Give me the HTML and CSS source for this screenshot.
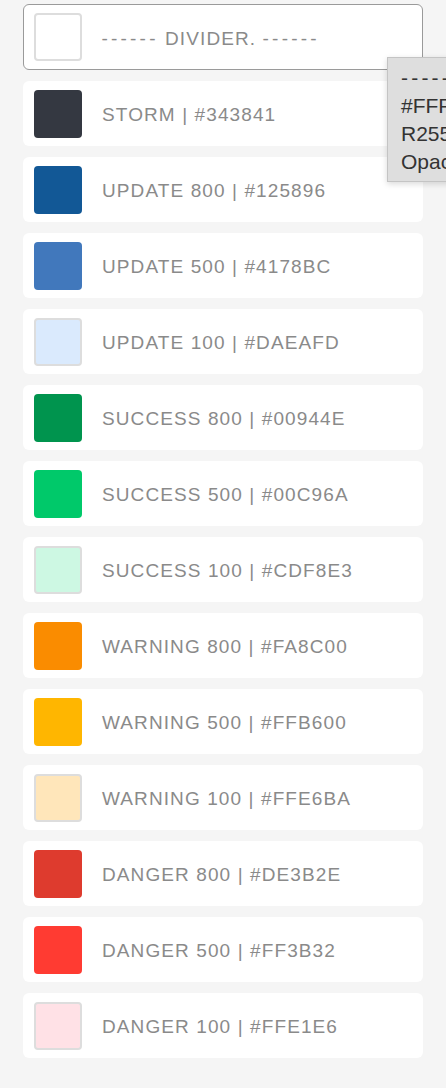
FILE: index.html
```html
<!DOCTYPE html>
<html lang="en">
<head>
    <meta charset="UTF-8">
    <meta name="viewport" content="width=device-width, initial-scale=1.0">
    <title>Palette</title>
    <link rel="stylesheet" href="styles.css">
</head>
<body>
    <div class="palette">
        <div class="swatch-row selected">
            <div class="chip chip-light" style="background-color: #FFFFFF"></div>
            <span class="label"><span class="dashes">------</span> DIVIDER. <span class="dashes">------</span></span>
        </div>
        <div class="swatch-row">
            <div class="chip" style="background-color: #343841"></div>
            <span class="label">STORM | #343841</span>
        </div>
        <div class="swatch-row">
            <div class="chip" style="background-color: #125896"></div>
            <span class="label">UPDATE 800 | #125896</span>
        </div>
        <div class="swatch-row">
            <div class="chip" style="background-color: #4178BC"></div>
            <span class="label">UPDATE 500 | #4178BC</span>
        </div>
        <div class="swatch-row">
            <div class="chip chip-light" style="background-color: #DAEAFD"></div>
            <span class="label">UPDATE 100 | #DAEAFD</span>
        </div>
        <div class="swatch-row">
            <div class="chip" style="background-color: #00944E"></div>
            <span class="label">SUCCESS 800 | #00944E</span>
        </div>
        <div class="swatch-row">
            <div class="chip" style="background-color: #00C96A"></div>
            <span class="label">SUCCESS 500 | #00C96A</span>
        </div>
        <div class="swatch-row">
            <div class="chip chip-light" style="background-color: #CDF8E3"></div>
            <span class="label">SUCCESS 100 | #CDF8E3</span>
        </div>
        <div class="swatch-row">
            <div class="chip" style="background-color: #FA8C00"></div>
            <span class="label">WARNING 800 | #FA8C00</span>
        </div>
        <div class="swatch-row">
            <div class="chip" style="background-color: #FFB600"></div>
            <span class="label">WARNING 500 | #FFB600</span>
        </div>
        <div class="swatch-row">
            <div class="chip chip-light" style="background-color: #FFE6BA"></div>
            <span class="label">WARNING 100 | #FFE6BA</span>
        </div>
        <div class="swatch-row">
            <div class="chip" style="background-color: #DE3B2E"></div>
            <span class="label">DANGER 800 | #DE3B2E</span>
        </div>
        <div class="swatch-row">
            <div class="chip" style="background-color: #FF3B32"></div>
            <span class="label">DANGER 500 | #FF3B32</span>
        </div>
        <div class="swatch-row">
            <div class="chip chip-light" style="background-color: #FFE1E6"></div>
            <span class="label">DANGER 100 | #FFE1E6</span>
        </div>
    </div>

    <div class="tooltip">
        <div><span class="dashes">------</span> DIVIDER. <span class="dashes">------</span></div>
        <div>#FFFFFF</div>
        <div>R255 G255 B255</div>
        <div>Opacity 100%</div>
    </div>
</body>
</html>
```

FILE: styles.css
```css
html, body {
    overflow: hidden;
}
body {
    margin: 0;
    padding: 4px 23px 0 23px;
    height: 1088px;
    box-sizing: border-box;
    background-color: #f5f5f5;
    font-family: "Helvetica Neue", Helvetica, "Liberation Sans", Arial, sans-serif;
    position: relative;
}
.palette {
    display: flex;
    flex-direction: column;
    gap: 11px;
    width: 400px;
}
.swatch-row {
    display: flex;
    align-items: center;
    gap: 20px;
    height: 65px;
    padding: 0 11px;
    box-sizing: border-box;
    background-color: #fff;
    border-radius: 6px;
}
.swatch-row.selected {
    height: 66px;
    border: 1.5px solid #9a9a9a;
    padding: 0 9.5px;
}
.chip {
    width: 48px;
    height: 48px;
    border-radius: 4px;
    box-sizing: border-box;
    flex-shrink: 0;
}
.chip-light {
    border: 2px solid #dddddd;
}
.label {
    padding-top: 3px;
    font-size: 19px;
    letter-spacing: 1.1px;
    color: #8a8a8a;
    white-space: nowrap;
}
.dashes {
    letter-spacing: 3.2px;
}
.tooltip {
    position: absolute;
    left: 387px;
    top: 57px;
    padding: 6px 13px 5px 13px;
    background-color: #dedede;
    border: 1px solid #c4c4c4;
    box-shadow: 0 2px 6px rgba(0, 0, 0, 0.15);
    font-size: 21px;
    line-height: 28px;
    color: #333;
    white-space: nowrap;
}
```
